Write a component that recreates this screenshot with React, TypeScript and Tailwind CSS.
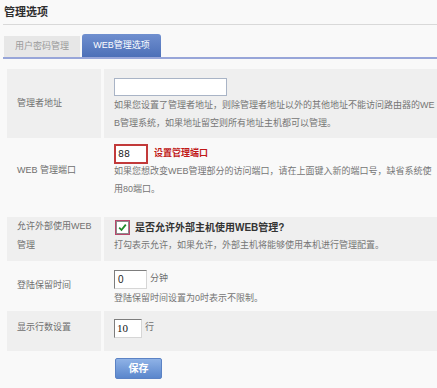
import React from 'react';

const font = "font-['Liberation_Sans','Noto_Sans_CJK_SC',sans-serif]";

function Check() {
  return (
    <span className="flex h-[15px] w-[15px] items-center justify-center border border-[#b8476b]">
      <span className="flex h-[13px] w-[13px] items-center justify-center border border-[#8c8c8c] bg-white">
        <svg width="9" height="9" viewBox="0 0 9 9">
          <path d="M1.2 4.6 L3.5 7 L7.8 1.6" fill="none" stroke="#1f8a2a" strokeWidth="1.8" />
        </svg>
      </span>
    </span>
  );
}

const inset = 'border border-[#d6d6d6] border-t-[#7d7d7d] border-l-[#7d7d7d] bg-white';

export default function App() {
  return (
    <div className={`w-[437px] h-[388px] overflow-hidden bg-[#f9f9f9] ${font}`}>
      {/* 标题 */}
      <div className="flex h-[24px] items-center pl-[4px] text-[11px] font-bold text-[#2e2e2e]">管理选项</div>
      <div className="ml-[3px] h-px bg-[#d9d9d9]" />

      {/* 选项卡 */}
      <div className="mt-[8px] flex h-[24px] items-end gap-[2px] pl-[4px] text-[9px]">
        <div className="flex h-[21px] w-[76px] items-center justify-center bg-[#e7e7e7] text-[#9a9a9a]">用户密码管理</div>
        <div className="flex h-[23px] w-[79px] items-center justify-center rounded-t-[3px] bg-gradient-to-b from-[#6f8fcf] to-[#4d70b8] text-white">
          WEB管理选项
        </div>
      </div>
      <div className="ml-[3px] h-[2px] bg-[#98a6d9]" />

      <div className="mt-[10px] pl-[7px] text-[9px] text-[#6f6f6f]">
        {/* 管理者地址 */}
        <div className="flex h-[69px] gap-[3px]">
          <div className="flex w-[94px] items-center bg-[#efefef] pl-[10px]">管理者地址</div>
          <div className="flex flex-1 flex-col justify-center bg-[#efefef] pl-[10px] pt-[3px]">
            <div className="h-[18px] w-[113px] border border-[#a9b4c6] bg-white" />
            <p className="break-all leading-[18px] text-[#757575]">
              如果您设置了管理者地址，则除管理者地址以外的其他地址不能访问路由器的WEB管理系统，如果地址留空则所有地址主机都可以管理。
            </p>
          </div>
        </div>

        {/* WEB 管理端口 */}
        <div className="flex h-[79px] gap-[3px]">
          <div className="flex w-[94px] items-center pb-[13px] pl-[10px]">WEB 管理端口</div>
          <div className="flex flex-1 flex-col pl-[10px] pt-[6px]">
            <div className="flex h-[20px] items-center">
              <div className="flex h-[20px] w-[34px] items-center border-2 border-[#c23a3a] bg-white pl-[2px] font-['Liberation_Mono',monospace] text-[10px] text-[#222]">
                88
              </div>
              <span className="ml-[6px] font-bold text-[#c01818]">设置管理端口</span>
            </div>
            <p className="-mt-[2px] break-all leading-[18px] text-[#757575]">
              如果您想改变WEB管理部分的访问端口，请在上面键入新的端口号，缺省系统使用80端口。
            </p>
          </div>
        </div>

        {/* 允许外部使用 */}
        <div className="flex h-[44px] gap-[3px]">
          <div className="flex w-[94px] items-center bg-[#efefef] pb-[6px] pl-[10px] pr-[4px] leading-[19px]">
            允许外部使用WEB管理
          </div>
          <div className="flex flex-1 flex-col justify-center bg-[#efefef] pb-[6px] pl-[10px]">
            <div className="flex h-[18px] items-center pl-[1px]">
              <Check />
              <span className="ml-[5px] text-[10px] font-bold text-[#333]">是否允许外部主机使用WEB管理?</span>
            </div>
            <p className="leading-[17px] text-[#757575]">打勾表示允许，如果允许，外部主机将能够使用本机进行管理配置。</p>
          </div>
        </div>

        {/* 登陆保留时间 */}
        <div className="flex h-[50px] gap-[3px]">
          <div className="flex w-[94px] items-center pl-[10px]">登陆保留时间</div>
          <div className="flex flex-1 flex-col justify-center pl-[10px] pt-[4px]">
            <div className="flex h-[20px] items-center">
              <div className={`flex h-[19px] w-[33px] items-center pl-[3px] text-[10px] text-[#222] ${inset}`}>0</div>
              <span className="ml-[3px]">分钟</span>
            </div>
            <p className="leading-[18px] text-[#757575]">登陆保留时间设置为0时表示不限制。</p>
          </div>
        </div>

        {/* 显示行数设置 */}
        <div className="flex h-[40px] gap-[3px]">
          <div className="flex w-[94px] items-center bg-[#efefef] pb-[6px] pl-[10px]">显示行数设置</div>
          <div className="flex flex-1 items-center bg-[#efefef] pb-[6px] pl-[10px]">
            <div className={`flex h-[19px] w-[28px] items-center pl-[2px] font-['Liberation_Serif',serif] text-[11px] text-[#111] ${inset}`}>
              10
            </div>
            <span className="ml-[3px]">行</span>
          </div>
        </div>

        <button className="ml-[108px] mt-[7px] flex h-[21px] w-[47px] items-center justify-center rounded-[2px] border border-[#5b82c4] bg-gradient-to-b from-[#8fb2e6] to-[#5a86cc] text-[10px] font-bold text-white">
          保存
        </button>
      </div>
    </div>
  );
}
